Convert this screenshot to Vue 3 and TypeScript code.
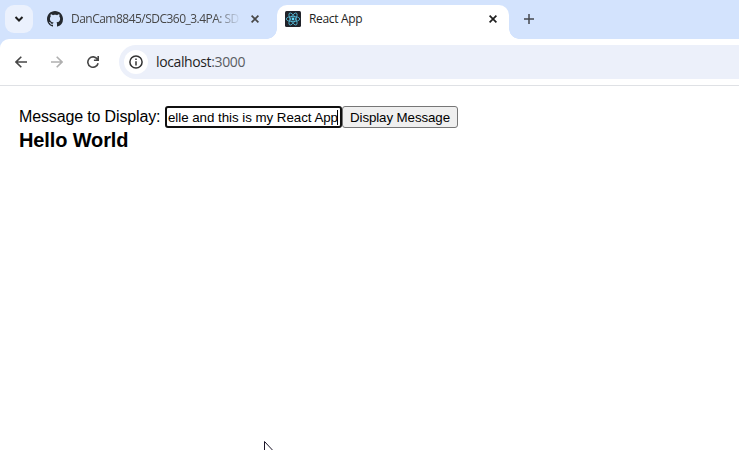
<script setup lang="ts">
import { ref } from 'vue'

const tabs = ref([
  { title: 'DanCam8845/SDC360_3.4PA: SD', active: false },
  { title: 'React App', active: true },
])
const host = 'localhost'
const port = ':3000'
const typed = ref('elle and this is my React App')
const message = ref('Hello World')
</script>

<template>
  <div class="window">
    <header class="strip">
      <button class="search" aria-label="Search tabs">
        <svg width="10" height="8" viewBox="0 0 10 8"><path d="M1.5 2 5 5.5 8.500 2" fill="none" stroke="#1f1f1f" stroke-width="2" /></svg>
      </button>
      <div v-for="tab in tabs" :key="tab.title" class="tab" :class="{ active: tab.active }">
        <svg v-if="!tab.active" class="favicon" width="16" height="16" viewBox="0 0 16 16">
          <path fill="#24292f" d="M8 0C3.58 0 0 3.58 0 8c0 3.54 2.290 6.530 5.470 7.590.4.070.55-.17.55-.38 0-.19-.01-.82-.01-1.490-2.010.37-2.530-.49-2.690-.94-.09-.23-.48-.94-.82-1.130-.28-.15-.68-.52-.01-.53.63-.01 1.080.58 1.230.82.72 1.210 1.870.87 2.330.66.070-.52.28-.87.51-1.070-1.780-.2-3.640-.89-3.640-3.950 0-.87.31-1.590.82-2.150-.08-.2-.36-1.020.08-2.120 0 0 .67-.21 2.200.82.64-.18 1.320-.27 2-.27s1.360.09 2 .27c1.530-1.040 2.200-.82 2.200-.82.44 1.100.16 1.920.08 2.120.51.56.82 1.270.82 2.150 0 3.070-1.870 3.750-3.650 3.950.29.25.54.73.54 1.480 0 1.070-.01 1.930-.01 2.200 0 .21.15.46.55.38A8.010 8.010 0 0 0 16 8c0-4.420-3.580-8-8-8z" />
        </svg>
        <svg v-else class="favicon" width="16" height="16" viewBox="0 0 16 16">
          <rect width="16" height="16" rx="1.500" fill="#20232a" />
          <g fill="none" stroke="#55bddb" stroke-width=".8">
            <ellipse cx="8" cy="8" rx="6.800" ry="2.600" />
            <ellipse cx="8" cy="8" rx="6.800" ry="2.600" transform="rotate(60 8 8)" />
            <ellipse cx="8" cy="8" rx="6.800" ry="2.600" transform="rotate(120 8 8)" />
          </g>
          <circle cx="8" cy="8" r="1.400" fill="#61dafb" />
        </svg>
        <span class="title">{{ tab.title }}</span>
        <svg class="close" width="8" height="8" viewBox="0 0 8 8"><path d="M.6.6l6.800 6.800M7.400.6.6 7.400" stroke="currentColor" stroke-width="1.700" /></svg>
      </div>
      <svg class="plus" width="10" height="10" viewBox="0 0 10 10"><path d="M5 0v10M0 5h10" stroke="#45484d" stroke-width="1.500" /></svg>
    </header>

    <nav class="toolbar">
      <svg class="nav" width="12" height="12" viewBox="0 0 12 12"><path d="M12 6H1.200M6.300.7 1 6l5.300 5.300" fill="none" stroke="#474747" stroke-width="1.600" /></svg>
      <svg class="nav" width="12" height="12" viewBox="0 0 12 12"><path d="M0 6h10.800M5.700.7 11 6l-5.300 5.300" fill="none" stroke="#b0b0b0" stroke-width="1.600" /></svg>
      <svg class="nav" width="12" height="12" viewBox="0 0 12 12"><path d="M10.500 3.400A5.200 5.200 0 1 0 11.100 7.200M11.200 0v4.300H6.900" fill="none" stroke="#474747" stroke-width="1.600" /></svg>
      <div class="omnibox">
        <span class="info">
          <svg width="14" height="14" viewBox="0 0 14 14"><circle cx="7" cy="7" r="6.100" fill="none" stroke="#333" stroke-width="1.500" /><path d="M7 6.200v4.200M7 3.500v1.500" stroke="#333" stroke-width="1.500" /></svg>
        </span>
        <span class="url">{{ host }}<span class="port">{{ port }}</span></span>
      </div>
    </nav>

    <main class="page">
      <div class="form">
        <label class="label">Message to Display:</label>
        <div class="field"><span class="value">{{ typed }}</span><i class="caret"></i></div>
        <button class="submit"><span>Display Message</span></button>
      </div>
      <h1 class="message">{{ message }}</h1>
      <svg class="cursor" width="12" height="19" viewBox="0 0 12 19"><path d="M.5.500v16l3.700-3.600 2.300 5.300 2-1-2.300-5.100h5.100z" fill="#fff" stroke="#1b1528" /></svg>
    </main>
  </div>
</template>

<style>
body { margin: 0; overflow: hidden; background: #fff; }
</style>

<style scoped>
.window { position: relative; width: 739px; height: 450px; overflow: hidden; background: linear-gradient(#d3e3fd 50px, #fff 50px); font-family: "Open Sans", "Noto Sans", sans-serif; }
svg { display: block; flex: none; }
button { font: inherit; }
.strip { display: flex; height: 39px; box-sizing: border-box; padding: 5px 0 0 5px; background: #d3e3fd; }
.search { width: 28px; height: 28px; padding: 0; border: 0; border-radius: 9px; background: #ebf1fd; display: grid; place-items: center; flex: none; }
.tab { position: relative; display: flex; align-items: center; box-sizing: border-box; height: 34px; width: 230px; margin: 0 10px 0 4px; padding: 0 8px 6px 10px; color: #474747; }
.tab.active { width: 232px; margin: 0; padding: 0 12px 6px 8px; background: #fff; border-radius: 10px 10px 0 0; color: #1f1f1f; }
.tab.active::before, .tab.active::after { content: ""; position: absolute; bottom: 0; width: 10px; height: 10px; }
.tab.active::before { left: -10px; background: radial-gradient(circle at 0 0, #d3e3fd 9.500px, #fff 10px); }
.tab.active::after { right: -10px; background: radial-gradient(circle at 100% 0, #d3e3fd 9.500px, #fff 10px); }
.title { width: 170px; margin-left: 8px; white-space: nowrap; font-size: 12px; line-height: 18px; letter-spacing: -.52px; mask-image: linear-gradient(90deg, #000 143px, transparent 170px); }
.active .title { letter-spacing: -.32px; mask-image: none; }
.close { margin-left: auto; }
.plus { margin: 9px 0 0 15px; }
.toolbar { display: flex; align-items: center; height: 46px; box-sizing: border-box; padding-left: 15px; background: #fff; border-radius: 9px 0 0; box-shadow: 0 1px 0 #dfe1e5; }
.nav { margin-right: 24px; }
.omnibox { flex: 1; height: 34px; margin-left: -4px; border-radius: 17px 0 0 17px; background: #ecf0fa; display: flex; align-items: center; padding-left: 5px; }
.info { width: 24px; height: 24px; border-radius: 50%; background: #fff; display: grid; place-items: center; }
.url { margin-left: 8px; font-size: 14px; line-height: 18px; letter-spacing: -.38px; color: #1f1f1f; }
.port { color: #5a5d62; }
.page { padding: 21px 0 0 19px; font-family: "Liberation Sans", Arial, sans-serif; color: #000; }
.form { display: flex; height: 22px; }
.label { width: 146px; font-size: 16px; line-height: 21px; letter-spacing: -.14px; white-space: nowrap; }
.field { width: 177px; height: 22px; box-sizing: border-box; border: 2px solid #101010; border-radius: 3px; display: flex; align-items: center; padding-left: 1px; font-size: 13.333px; letter-spacing: -.04px; white-space: nowrap; }
.caret { width: 1px; height: 15px; margin-left: -1px; background: #000; }
.submit { width: 116px; height: 22px; box-sizing: border-box; padding: 1px 0 0; border: 1px solid #767676; border-radius: 3px; background: #efefef; font-size: 13.333px; line-height: 20px; letter-spacing: -.1px; color: #000; }
.message { margin: 1px 0 0; font-size: 20px; line-height: 23px; font-weight: 700; letter-spacing: -.13px; }
.cursor { position: absolute; left: 264px; top: 441px; }
</style>
